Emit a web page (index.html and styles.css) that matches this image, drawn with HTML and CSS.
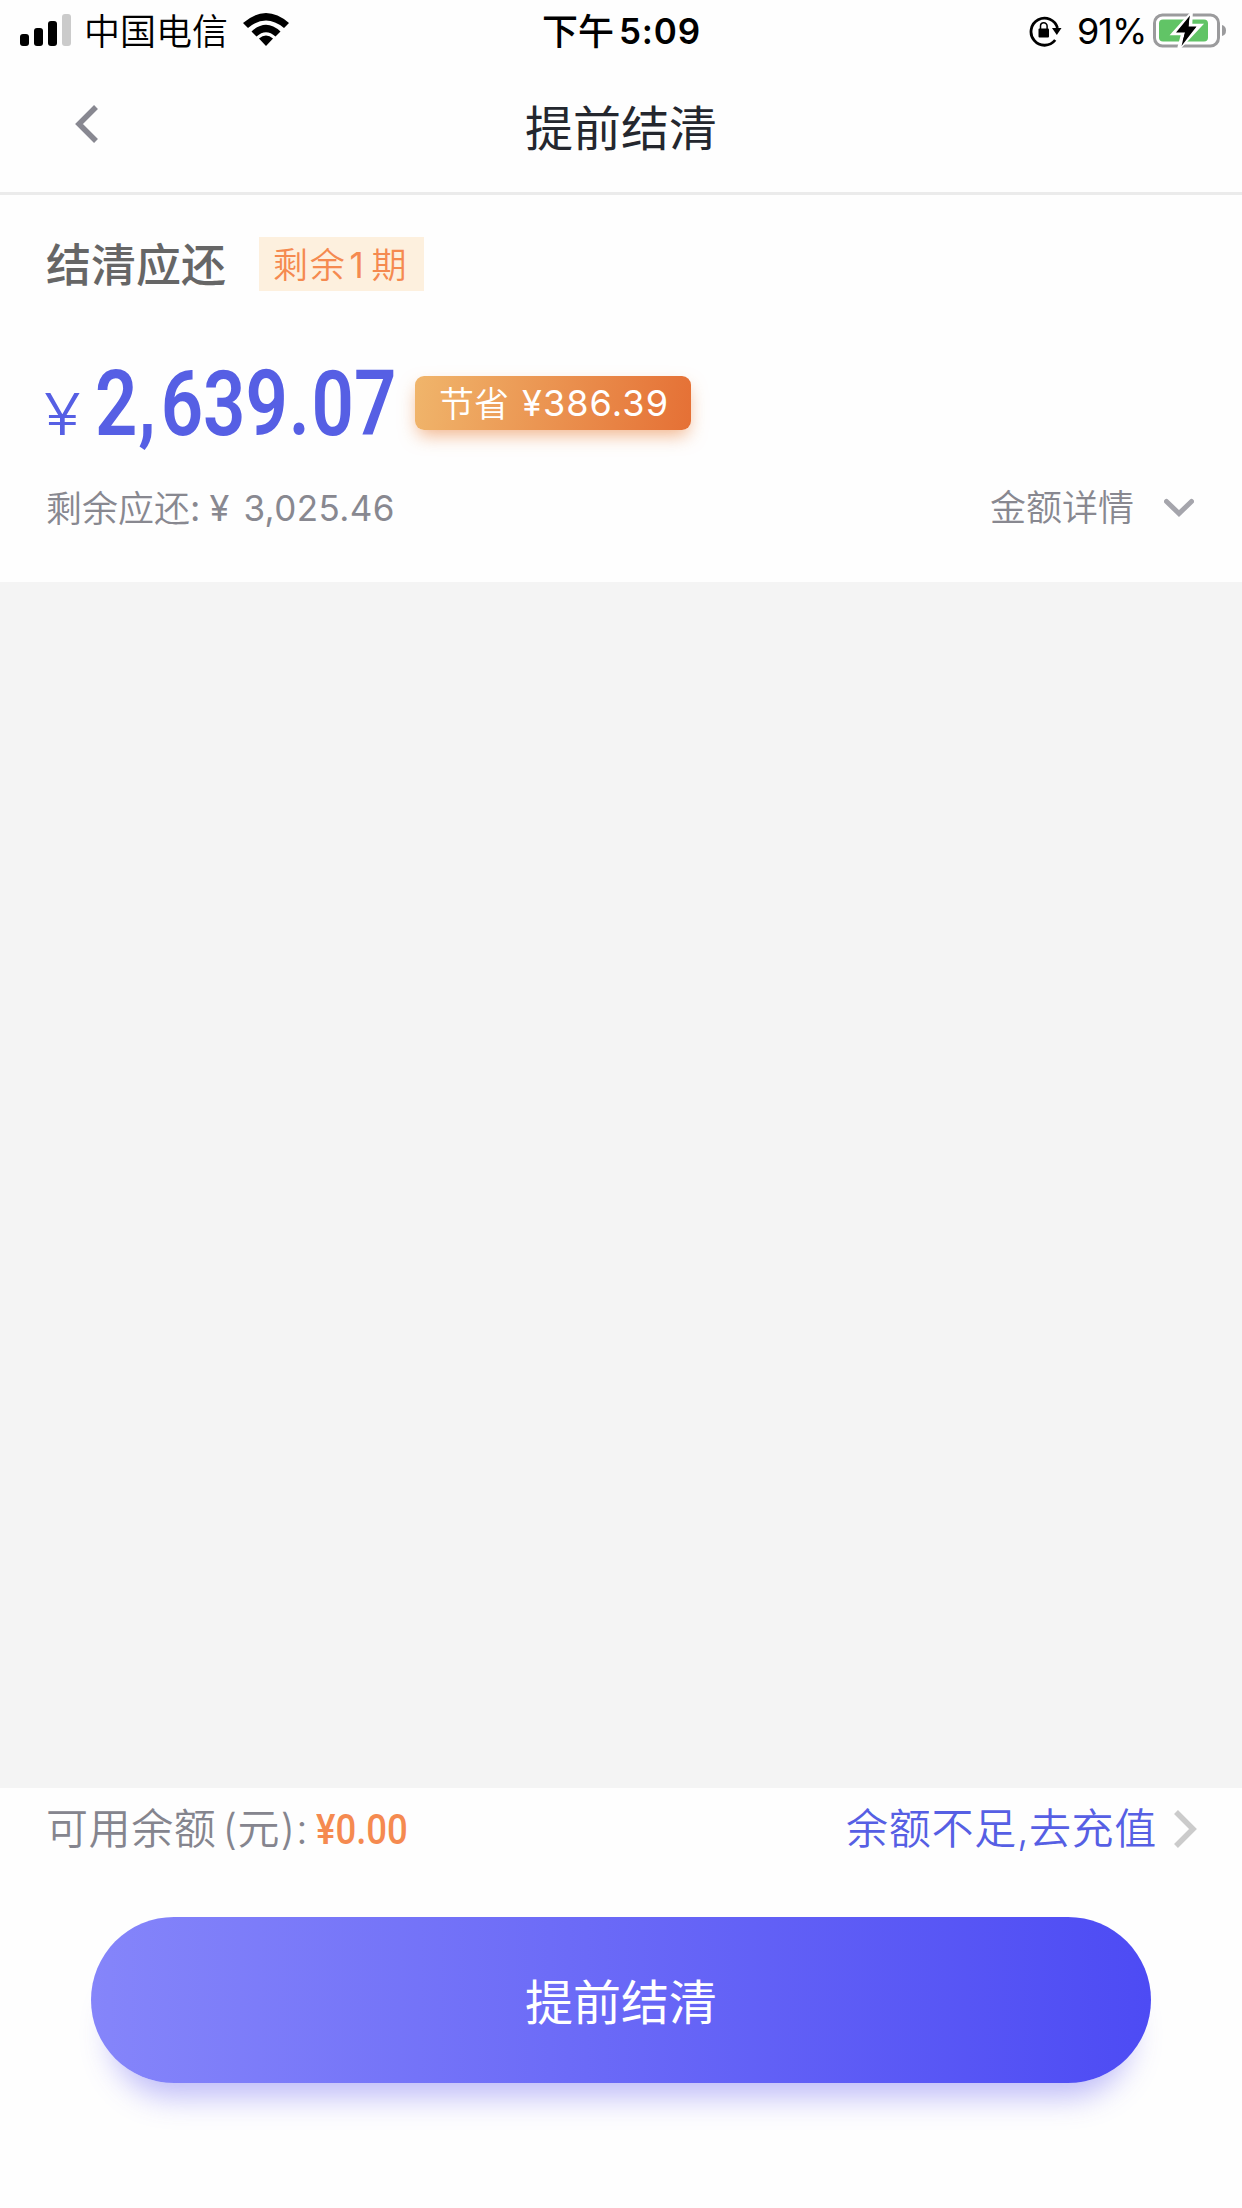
FILE: index.html
```html
<!DOCTYPE html>
<html lang="zh-CN">
<head>
<meta charset="utf-8">
<title>提前结清</title>
<link rel="stylesheet" href="styles.css">
</head>
<body>
<div class="screen">
  <div class="status">
    <div class="status-left">
      <svg class="signal" width="52" height="34" viewBox="0 0 52 34">
        <rect x="0" y="20" width="9" height="12" rx="3"/>
        <rect x="14" y="14" width="9" height="18" rx="3"/>
        <rect x="28" y="7" width="9" height="25" rx="3"/>
        <rect x="42" y="0" width="9" height="32" rx="3" fill="#cbcbcb"/>
      </svg>
      <span class="carrier">中国电信</span>
      <svg class="wifi" width="46" height="34" viewBox="0 0 46 34">
        <path d="M0 10Q23-10 46 10L41 15Q23 0 5 15Z"/>
        <path d="M8.500 18.500Q23 5 37.500 18.500L32.500 23.500Q23 15 13.500 23.500Z"/>
        <path d="M16 25.500Q23 19.500 30 25.500L23 33Z"/>
      </svg>
    </div>
    <div class="time"><span>下午</span><span class="clock">5:09</span></div>
    <div class="status-right">
      <svg width="34" height="32" viewBox="0 0 34 32">
        <path d="M26.200 25A13.500 13.500 0 1 1 28.500 13" fill="none" stroke="#000" stroke-width="2.800"/>
        <path d="M23 13h9.500l-4.700 7z"/>
        <rect x="9.500" y="13.500" width="10.500" height="9" rx="1"/>
        <path d="M11.500 14.500v-3.500a3.300 3.300 0 0 1 6.600 0v3.500" fill="none" stroke="#000" stroke-width="1.500"/>
      </svg>
      <span class="percent">91%</span>
      <svg class="battery" width="74" height="36" viewBox="0 0 74 36">
        <rect x="1.500" y="2" width="64" height="31" rx="8" fill="#fff" stroke="#9b9b9d" stroke-width="3"/>
        <rect x="6" y="6.500" width="49" height="22" rx="4" fill="#61c466"/>
        <path d="M69 12q4 1 4 5.500t-4 5.500z" fill="#9b9b9d"/>
        <path d="M38 1L20.500 20.500H30L26 35L47 12.500H37.500Z" fill="#000" stroke="#fff" stroke-width="3.500"/>
        <path d="M37 2.500L23 19.500H32L28.500 33L43.500 13.500H35Z"/>
      </svg>
    </div>
  </div>
  <header class="nav">
    <svg class="back" width="24" height="38" viewBox="0 0 24 38"><path d="M21 2L4 19L21 36" fill="none" stroke="#888891" stroke-width="5.500"/></svg>
    <h1 class="title">提前结清</h1>
  </header>
  <section class="summary">
    <div class="heading">
      <h2 class="label">结清应还</h2>
      <span class="periods">剩余<span class="count">1</span>期</span>
    </div>
    <div class="amount-row">
      <span class="yen"><span class="yen-text">¥</span></span>
      <span class="amount"><span class="amount-text">2<span class="group">,</span>639<span class="point">.</span>07</span></span>
      <span class="saving"><span class="saving-label">节省</span><span class="saving-value">¥386.39</span></span>
    </div>
    <div class="detail-row">
      <span class="remaining">剩余应还<span class="latin">:</span><span class="latin money-sign">¥</span><span class="latin money">3,025.46</span></span>
      <span class="detail">金额详情<svg class="down" width="30" height="20" viewBox="0 0 30 20"><path d="M2.500 3.500L15 15.500L27.500 3.500" fill="none" stroke="#a5a5ac" stroke-width="5" stroke-linecap="round"/></svg></span>
    </div>
  </section>
  <main class="blank"></main>
  <footer class="footer">
    <div class="balance-row">
      <span class="balance"><span class="balance-label">可用余额</span><span class="paren-open">(</span><span class="unit">元</span><span class="paren-close">)</span><span class="colon">:</span><span class="available"><span class="available-text">¥0.00</span></span></span>
      <span class="recharge">余额不足<span class="comma">,</span>去充值<svg class="next" width="24" height="38" viewBox="0 0 24 38"><path d="M3 2L20 19L3 36" fill="none" stroke="#cbcbcb" stroke-width="5.500"/></svg></span>
    </div>
    <button class="settle" type="button">提前结清</button>
  </footer>
</div>
</body>
</html>
```

FILE: styles.css
```css
* { box-sizing: border-box; }
body { margin: 0; background: #fff; font-family: Inter, "Noto Sans CJK SC", sans-serif; }
svg { display: block; flex: none; }
h1, h2 { margin: 0; font-weight: 400; }
.screen { width: 1242px; height: 2208px; display: flex; flex-direction: column; background: #fefefe; overflow: hidden; }

.status { height: 62px; display: grid; grid-template-columns: 1fr 158px 1fr; color: #000; font-size: 36px; line-height: 64px; white-space: nowrap; }
.status-left { display: flex; align-items: flex-start; padding-left: 20px; }
.signal { margin-top: 14px; }
.carrier { width: 144px; margin-left: 12px; font-weight: 350; }
.wifi { margin: 13px 0 0 15px; }
.time { display: flex; font-weight: 500; }
.clock { width: 82px; margin-left: 5px; font-weight: 600; font-size: 35px; letter-spacing: 0.8px; line-height: 62px; }
.status-right { display: flex; justify-content: flex-end; padding: 0 15px 0 0; }
.status-right svg { margin-top: 15px; }
.percent { width: 76px; margin-left: 14px; font-size: 36px; letter-spacing: -1px; line-height: 62px; }
.status-right .battery { margin-top: 13px; }

.nav { height: 133px; display: grid; grid-template-columns: 99px 1fr 99px; align-items: start; border-bottom: 3px solid #ebebeb; }
.back { margin: 43px 0 0 75px; }
.title { text-align: center; font-size: 48px; line-height: 133px; height: 130px; color: #24272e; }

.summary { height: 387px; padding: 42px 46px 0; }
.heading { display: flex; height: 54px; align-items: center; }
.label { width: 213px; font-size: 45px; line-height: 58px; height: 54px; font-weight: 500; color: #666; }
.periods { width: 165px; height: 54px; padding-left: 14px; background: #fdf0de; color: #f58a50; font-size: 35px; font-weight: 350; letter-spacing: 1.7px; line-height: 56px; white-space: nowrap; }
.count { display: inline-block; width: 25px; padding-left: 3px; letter-spacing: 0; font-weight: 400; }
.amount-row { display: flex; height: 100px; margin-top: 64px; color: #565fe4; }
.yen { width: 48px; padding-top: 12px; margin-left: -2px; }
.yen-text { display: inline-block; font: 350 58px/94px Inter, sans-serif; transform: scaleX(1.17); transform-origin: left; }
.amount { width: 323px; }
.amount-text { display: inline-block; margin-left: 3px; font: 600 90px/100px Roboto, sans-serif; transform: scaleX(0.825); transform-origin: left; }
.group { margin: 0 6px 0 1px; }
.point { margin: 0 2px 0 1px; }
.saving { display: flex; width: 276px; height: 54px; margin-top: 21px; padding-left: 24px; border-radius: 9px; background: linear-gradient(100deg, #f0b56b, #e57035); box-shadow: 0 8px 18px -3px rgba(235, 130, 60, 0.6); color: #fff; font-size: 35px; line-height: 56px; white-space: nowrap; }
.saving-label { width: 83px; font-weight: 350; }
.saving-value { font-size: 36px; letter-spacing: 1.1px; font-weight: 400; line-height: 54px; }
.detail-row { display: flex; justify-content: space-between; height: 52px; margin-top: 27px; padding-right: 2px; font-size: 36px; line-height: 54px; color: #888890; font-weight: 350; white-space: nowrap; }
.remaining { display: flex; }
.latin { font-weight: 400; line-height: 52px; }
.money-sign { margin-left: 9px; width: 34px; }
.money { font-size: 35px; letter-spacing: 0.4px; }
.detail { display: flex; align-items: center; }
.down { margin-left: 30px; }

.blank { height: 1206px; background: #f4f4f4; }
.footer { height: 420px; }
.balance-row { display: flex; justify-content: space-between; height: 82px; padding: 0 45px 0 46px; line-height: 82px; font-size: 42px; font-weight: 350; color: #85858e; white-space: nowrap; }
.balance { display: flex; }
.balance-label { letter-spacing: 0.6px; }
.paren-open { width: 15px; margin-left: 6px; }
.unit { width: 43px; }
.colon { margin-left: 1px; }
.available { width: 94px; margin-left: 8px; color: #f58a50; }
.available-text { display: inline-block; font: 500 42px/79px Roboto, sans-serif; transform: scaleX(0.87); transform-origin: left; }
.recharge { display: flex; align-items: center; color: #565fe4; letter-spacing: 0.7px; }
.comma { width: 12px; }
.next { margin-left: 16px; }
.settle { display: block; width: 1060px; height: 166px; margin: 47px auto 0; padding: 0 0 2px; border: 0; border-radius: 83px; background: linear-gradient(90deg, #8585fa, #6c6bf7 45%, #4d4bf4); box-shadow: 0 34px 30px -20px rgba(86, 80, 240, 0.38); color: #fff; font: 400 48px "Noto Sans CJK SC", sans-serif; }
```
